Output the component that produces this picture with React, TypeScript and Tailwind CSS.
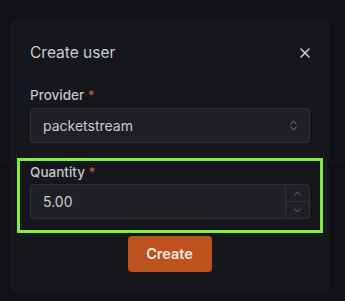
import { X, ChevronsUpDown, ChevronUp, ChevronDown } from 'lucide-react'

export default function App() {
  return (
    <div
      className="w-[345px] h-[301px] bg-[#111217] overflow-hidden relative pt-[19px] pl-[11px]"
      style={{ fontFamily: 'Inter, "Noto Sans", sans-serif' }}
    >
      <div className="absolute left-0 right-0 top-[161px] h-px bg-[#1a1b20]" />
      <div className="relative w-[318px] h-[273px] bg-[#16171c] rounded-[3px] px-[19px] pt-[23px]">
        <div className="flex items-center justify-between">
          <h2 className="text-[15.5px] text-[#c9cacd] font-normal leading-[22px]">Create user</h2>
          <X className="w-[16px] h-[16px] text-[#d4d5d8] -mr-[3px]" strokeWidth={2.2} />
        </div>
        <div className="mt-[22px]">
          <div className="text-[13.5px] font-medium text-[#c3c4c8] leading-[18px]">
            Provider <span className="text-[#d24b4b]">*</span>
          </div>
          <div className="mt-[4px] h-[35px] w-[280px] bg-[#1f2025] border border-[#2f3036] rounded-[4px] flex items-center justify-between pl-[12px] pr-[9px]">
            <span className="text-[14px] text-[#c7c8cb]">packetstream</span>
            <ChevronsUpDown className="w-[13px] h-[13px] text-[#8e8f93]" strokeWidth={1.6} />
          </div>
        </div>
        <div className="-mx-[13px] mt-[15px] border-[3px] border-[#82ec3c] px-[10px] pt-[2px] pb-[11px]">
          <div className="text-[13.5px] font-medium text-[#c3c4c8] leading-[18px]">
            Quantity <span className="text-[#d24b4b]">*</span>
          </div>
          <div className="mt-[3px] h-[35px] w-[280px] bg-[#1f2025] border border-[#2f3036] rounded-[4px] flex items-stretch overflow-hidden">
            <div className="flex-1 flex items-center pl-[12px] text-[14px] text-[#c7c8cb]">5.00</div>
            <div className="w-[24px] border-l border-[#2f3036] flex flex-col">
              <div className="flex-1 flex items-center justify-center border-b border-[#2f3036]">
                <ChevronUp className="w-[11px] h-[11px] text-[#8e8f93]" strokeWidth={1.6} />
              </div>
              <div className="flex-1 flex items-center justify-center">
                <ChevronDown className="w-[11px] h-[11px] text-[#8e8f93]" strokeWidth={1.6} />
              </div>
            </div>
          </div>
        </div>
        <div className="flex justify-center mt-[3px] pr-[1px]">
          <button className="w-[84px] h-[36px] bg-[#bd521f] rounded-[4px] text-[14.5px] font-semibold text-[#f3e9e3]">
            Create
          </button>
        </div>
      </div>
    </div>
  )
}
